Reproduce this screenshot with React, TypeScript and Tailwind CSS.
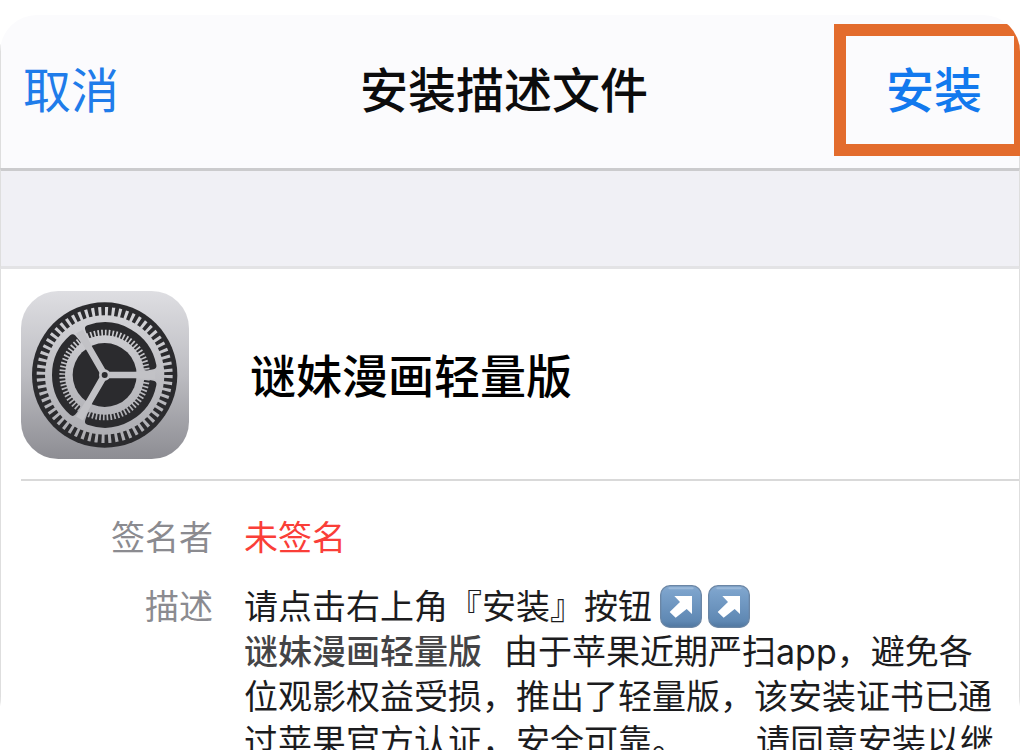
import type { ReactNode } from "react";

function SettingsIcon() {
  return (
    <svg viewBox="0 0 504 504" className="size-[168px] shrink-0" role="img" aria-label="设置">
      <defs>
        <linearGradient id="plate" x1="0" y1="0" x2="0" y2="504" gradientUnits="userSpaceOnUse">
          <stop offset="0" stopColor="#dedee2" />
          <stop offset="0.5" stopColor="#bcbcc1" />
          <stop offset="1" stopColor="#8d8d93" />
        </linearGradient>
        <linearGradient id="metal" x1="0" y1="34" x2="0" y2="470" gradientUnits="userSpaceOnUse">
          <stop offset="0" stopColor="#d6d6da" />
          <stop offset="1" stopColor="#a9a9ae" />
        </linearGradient>
      </defs>
      <rect width="504" height="504" rx="112" fill="url(#plate)" />
      <circle cx="251" cy="252" r="218" fill="#2b2b2e" />
      <circle cx="251" cy="252" r="190" fill="none" stroke="url(#metal)" strokeWidth="28" pathLength="600" strokeDasharray="4.5 5.5" />
      <circle cx="251" cy="252" r="179" fill="url(#metal)" />
      {[0, 120, 240].map((angle) => (
        <path
          key={angle}
          d="M395.3 224A147 147 0 0 0 203.1 113L209.3 131A128 128 0 0 1 376.6 227.6Z"
          transform={`rotate(${angle} 251 252)`}
          fill="#2b2b2e"
          stroke="#2b2b2e"
          strokeWidth="22"
          strokeLinejoin="round"
        />
      ))}
      <circle cx="251" cy="252" r="126" fill="none" stroke="url(#metal)" strokeWidth="20" pathLength="720" strokeDasharray="4.5 5.5" />
      <circle cx="251" cy="252" r="107" fill="none" stroke="url(#metal)" strokeWidth="24" />
      <circle cx="251" cy="252" r="96" fill="#2b2b2e" />
      {[0, 120, 240].map((angle) => (
        <path
          key={angle}
          d="M251 242H340L402 240V264L340 262H251Z"
          transform={`rotate(${angle} 251 252)`}
          fill="#c2c2c6"
        />
      ))}
      <circle cx="251" cy="252" r="17" fill="#c2c2c6" />
      <circle cx="251" cy="252" r="9" fill="#2b2b2e" />
    </svg>
  );
}

function ArrowBadge({ id }: { id: string }) {
  return (
    <svg viewBox="0 0 126 129" className="h-[43px] w-[42px] shrink-0" role="img" aria-label="右上箭头">
      <defs>
        <linearGradient id={id} x1="0" y1="0" x2="0" y2="1">
          <stop offset="0" stopColor="#86a9cf" />
          <stop offset="0.15" stopColor="#7ba2cb" />
          <stop offset="0.85" stopColor="#5f88b3" />
          <stop offset="1" stopColor="#4f769f" />
        </linearGradient>
      </defs>
      <rect x="2" y="2" width="122" height="125" rx="28" fill={`url(#${id})`} stroke="#6b86a5" strokeWidth="4" />
      <path d="M28 10H98" stroke="#b5cde6" strokeWidth="6" strokeLinecap="round" opacity="0.5" />
      <path d="M43 33H96V87L80 72L47 98L29 81L60 51Z" fill="#fff" />
    </svg>
  );
}

function Row({ label, children }: { label: string; children: ReactNode }) {
  return (
    <div className="flex gap-[31px] whitespace-nowrap text-[34px] leading-[45px]">
      <dt className="w-[212px] shrink-0 text-right text-[#8b8b90]">{label}</dt>
      <dd className="min-w-0 flex-1">{children}</dd>
    </div>
  );
}

export default function App() {
  return (
    <div className="h-screen overflow-hidden bg-white pt-[15px] font-['Inter','Noto_Sans_CJK_SC',sans-serif] text-[#1c1c1e]">
      <main className="flex h-full flex-col overflow-hidden rounded-t-[37px] rounded-b-[54px] bg-white">
        <header className="grid shrink-0 grid-cols-[1fr_auto_1fr] items-start border-x border-[#dedede] bg-[#fbfbfd] pt-[9px] pb-3 text-[48px]">
          <button type="button" className="h-[132px] justify-self-start pt-0.5 pl-[22px] text-[#1f7cea]">
            取消
          </button>
          <h1 className="flex h-[132px] items-center pt-0.5 pr-3 font-medium text-[#0c0c0d]">安装描述文件</h1>
          <button
            type="button"
            className="-mr-[7px] h-[132px] justify-self-end border-12 border-[#e36c2d] pt-0.5 pr-8 pl-10 font-medium text-[#1279ee]"
          >
            安装
          </button>
        </header>
        <div className="h-[101px] shrink-0 border-x border-t-3 border-b-3 border-x-[#dedede] border-t-[#cbcbcd] border-b-[#e3e3e5] bg-[#f0f0f5]" />
        <section className="flex-1 border-x border-[#dedede]">
          <div className="ml-5 flex items-center gap-[61px] border-b-2 border-[#d9d9d9] pt-[22px] pb-5">
            <SettingsIcon />
            <h2 className="pt-0.5 text-[46px] font-medium text-black">谜妹漫画轻量版</h2>
          </div>
          <dl className="flex flex-col gap-6 pt-[34px]">
            <Row label="签名者">
              <span className="text-[#fa3e38]">未签名</span>
            </Row>
            <Row label="描述">
              <p className="flex items-center">
                请点击右上角『安装』按钮
                <span className="ml-2 flex gap-1.5">
                  <ArrowBadge id="badge-a" />
                  <ArrowBadge id="badge-b" />
                </span>
              </p>
              <p className="flex gap-[22px]">
                <strong className="font-medium text-[#444446]">谜妹漫画轻量版</strong>
                <span>由于苹果近期严扫app，避免各</span>
              </p>
              <p>位观影权益受损，推出了轻量版，该安装证书已通</p>
              <p className="flex gap-[70px]">
                <span>过苹果官方认证，安全可靠。</span>
                <span>请同意安装以继</span>
              </p>
            </Row>
          </dl>
        </section>
      </main>
    </div>
  );
}
